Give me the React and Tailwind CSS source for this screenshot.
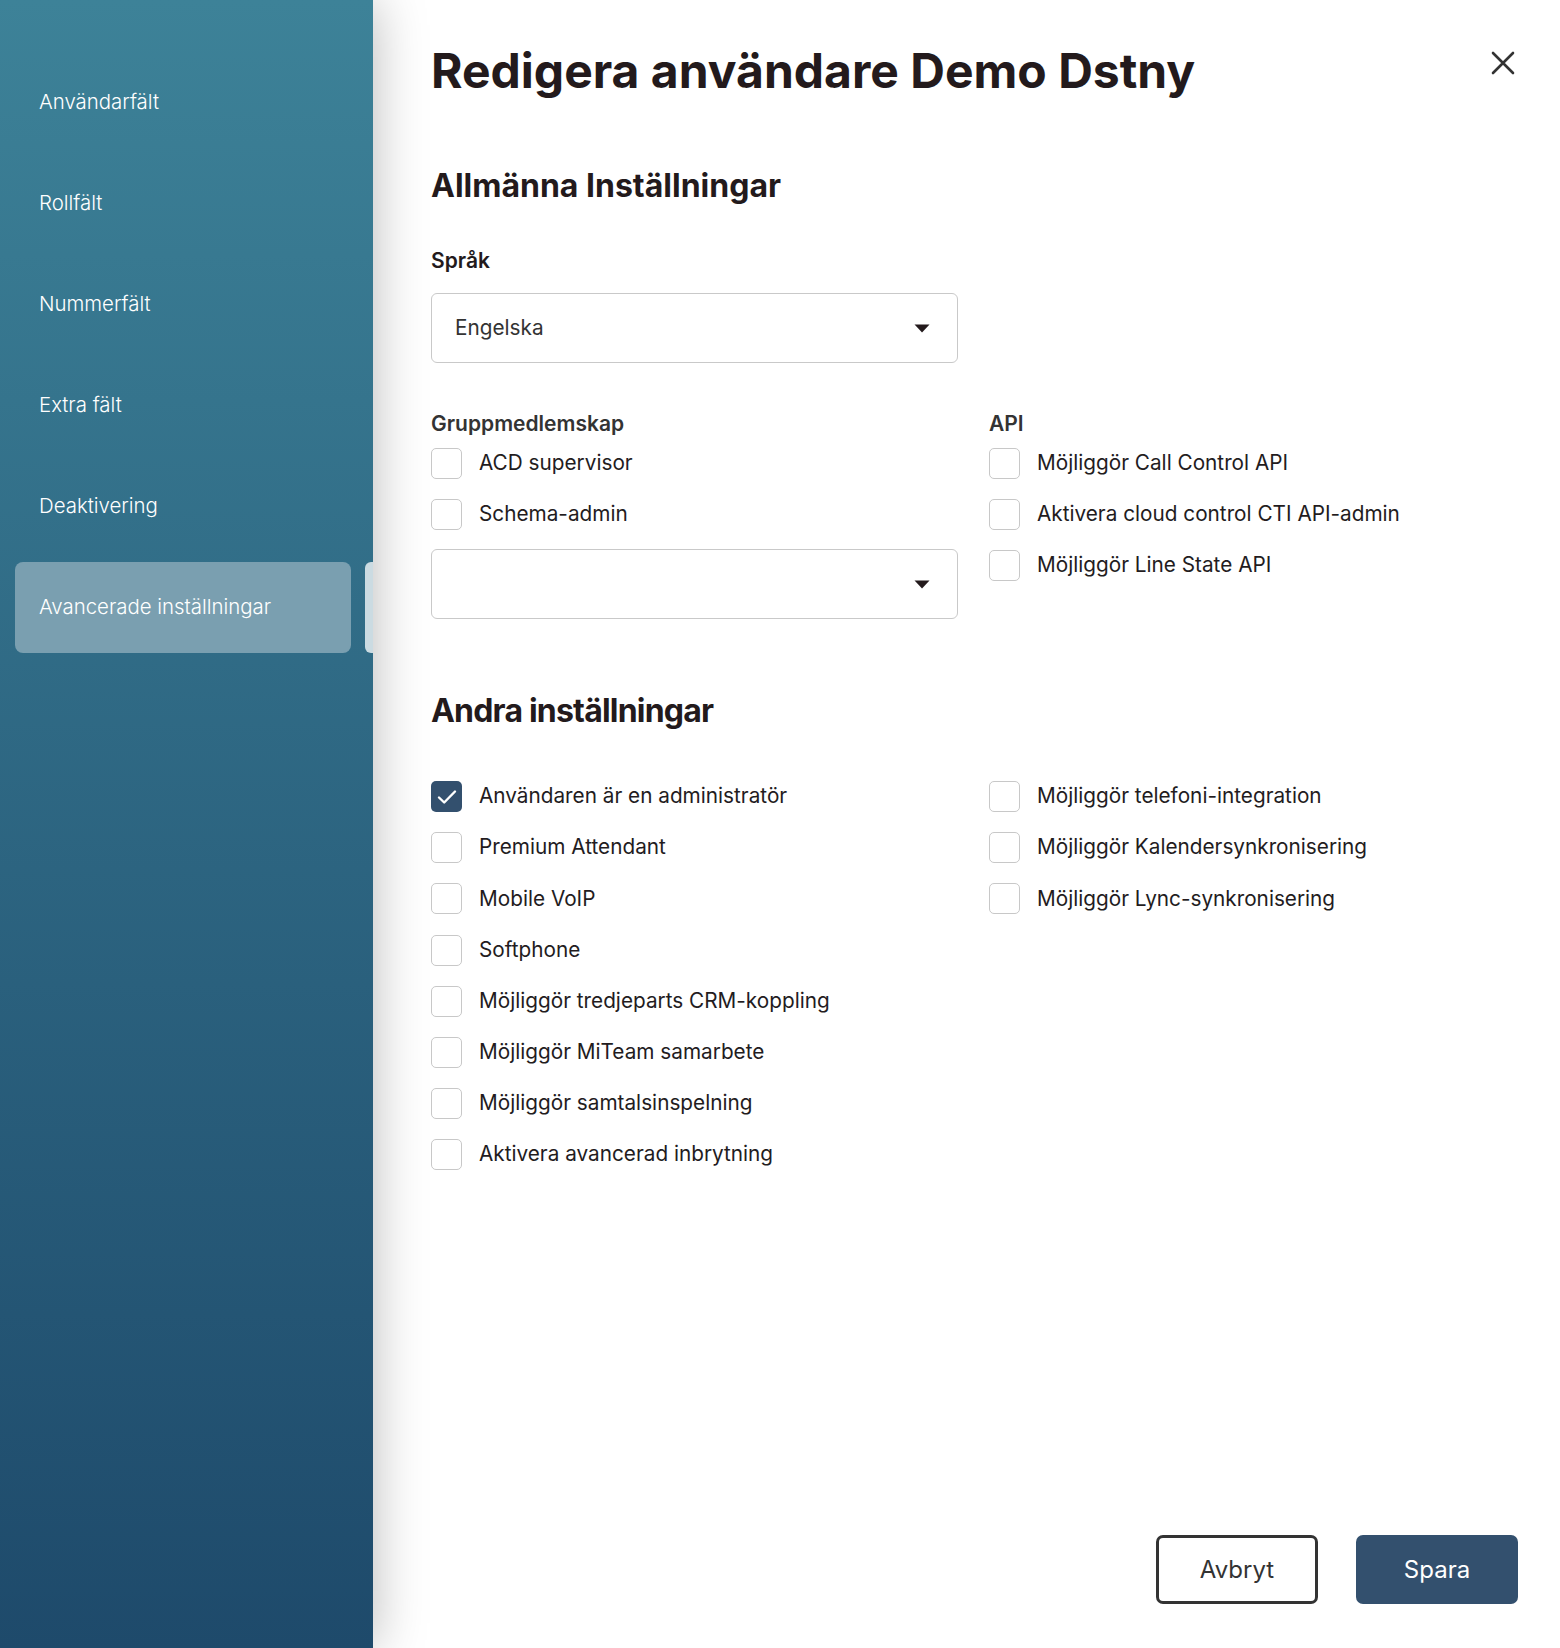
import React from "react";

const navItems = [
  "Användarfält",
  "Rollfält",
  "Nummerfält",
  "Extra fält",
  "Deaktivering",
];

function Caret() {
  return (
    <svg width="16" height="9" viewBox="0 0 16 9" className="shrink-0">
      <path d="M0.5 0.5 L15.5 0.5 L8 8.5 Z" fill="#231a1c" />
    </svg>
  );
}

function Select({ value }) {
  return (
    <div className="flex h-[70px] w-[527px] items-center justify-between rounded-[6px] border border-[#c9c9c9] bg-white pl-[23px] pr-[27px]">
      <span className="text-[20.75px] text-[#333333]">{value}</span>
      <Caret />
    </div>
  );
}

function Check({ label, checked }) {
  return (
    <div className="flex h-[31px] items-center gap-[17px]">
      {checked ? (
        <div className="flex h-[31px] w-[31px] shrink-0 items-center justify-center rounded-[5px] bg-[#33506e]">
          <svg width="20" height="16" viewBox="0 0 20 16" fill="none">
            <path d="M2 8.5 L7.2 13.5 L18 2.5" stroke="white" strokeWidth="2.4" strokeLinecap="round" strokeLinejoin="round" />
          </svg>
        </div>
      ) : (
        <div className="h-[31px] w-[31px] shrink-0 rounded-[5px] border border-[#c8c8c8] bg-white" />
      )}
      <span className="text-[20.75px] leading-none text-[#231c1e]">{label}</span>
    </div>
  );
}

export default function App() {
  return (
    <div className="flex h-[1648px] w-full bg-white font-[Inter,sans-serif]">
      <aside className="relative z-10 flex w-[373px] shrink-0 flex-col gap-[10px] bg-gradient-to-b from-[#3d8298] to-[#1e4a6b] pt-[57px] shadow-[0_0_50px_rgba(0,0,0,0.28)]">
        {navItems.map((n) => (
          <div key={n} className="flex h-[91px] items-center pl-[39px] text-[20.4px] font-light text-white">
            {n}
          </div>
        ))}
        <div className="flex h-[91px] items-center gap-[14px] pl-[15px]">
          <div className="flex h-[91px] w-[336px] items-center rounded-[8px] bg-[#7a9fb0] pl-[24px] text-[20.4px] font-light text-white">
            Avancerade inställningar
          </div>
          <div className="h-[91px] w-[8px] rounded-l-[6px] bg-[#cbdbe2]" />
        </div>
      </aside>

      <main className="flex flex-1 flex-col pl-[58px] pr-[42px] pb-[44px] text-[#231a1c]">
        <div className="flex items-start justify-between pt-[42px]">
          <h1 className="text-[48px] font-bold leading-[58px] text-[#231a1c]">
            Redigera användare Demo Dstny
          </h1>
          <button className="mr-[2px] mt-[8px] p-[1px]">
            <svg width="24" height="24" viewBox="0 0 24 24" fill="none">
              <path d="M2 2 L22 22 M22 2 L2 22" stroke="#333333" strokeWidth="2.6" strokeLinecap="round" />
            </svg>
          </button>
        </div>

        <h2 className="mt-[66px] text-[32px] font-bold leading-[40px]">
          Allmänna Inställningar
        </h2>

        <div className="mt-[41px] text-[21px] font-semibold leading-[28px]">Språk</div>
        <div className="mt-[18px]">
          <Select value="Engelska" />
        </div>

        <div className="mt-[47px] grid grid-cols-[527px_1fr] gap-x-[31px]">
          <div className="flex flex-col">
            <div className="text-[21px] font-semibold leading-[28px] text-[#333333]">Gruppmedlemskap</div>
            <div className="mt-[10px] flex flex-col gap-[20px]">
              <Check label="ACD supervisor" />
              <Check label="Schema-admin" />
            </div>
            <div className="mt-[19px]">
              <Select value="" />
            </div>
          </div>
          <div className="flex flex-col">
            <div className="text-[21px] font-semibold leading-[28px] text-[#333333]">API</div>
            <div className="mt-[10px] flex flex-col gap-[20px]">
              <Check label="Möjliggör Call Control API" />
              <Check label="Aktivera cloud control CTI API-admin" />
              <Check label="Möjliggör Line State API" />
            </div>
          </div>
        </div>

        <h2 className="mt-[72px] text-[32px] font-bold leading-[40px] tracking-tight">
          Andra inställningar
        </h2>

        <div className="mt-[50px] grid grid-cols-[527px_1fr] gap-x-[31px]">
          <div className="flex flex-col gap-[20.2px]">
            <Check label="Användaren är en administratör" checked />
            <Check label="Premium Attendant" />
            <Check label="Mobile VoIP" />
            <Check label="Softphone" />
            <Check label="Möjliggör tredjeparts CRM-koppling" />
            <Check label="Möjliggör MiTeam samarbete" />
            <Check label="Möjliggör samtalsinspelning" />
            <Check label="Aktivera avancerad inbrytning" />
          </div>
          <div className="flex flex-col gap-[20.2px]">
            <Check label="Möjliggör telefoni-integration" />
            <Check label="Möjliggör Kalendersynkronisering" />
            <Check label="Möjliggör Lync-synkronisering" />
          </div>
        </div>

        <div className="mt-auto flex justify-end gap-[38px]">
          <button className="flex h-[69px] w-[162px] items-center justify-center rounded-[7px] border-[3px] border-[#333333] bg-white text-[24px] text-[#333333]">
            Avbryt
          </button>
          <button className="flex h-[69px] w-[162px] items-center justify-center rounded-[7px] bg-[#33506e] text-[24px] text-white">
            Spara
          </button>
        </div>
      </main>
    </div>
  );
}
